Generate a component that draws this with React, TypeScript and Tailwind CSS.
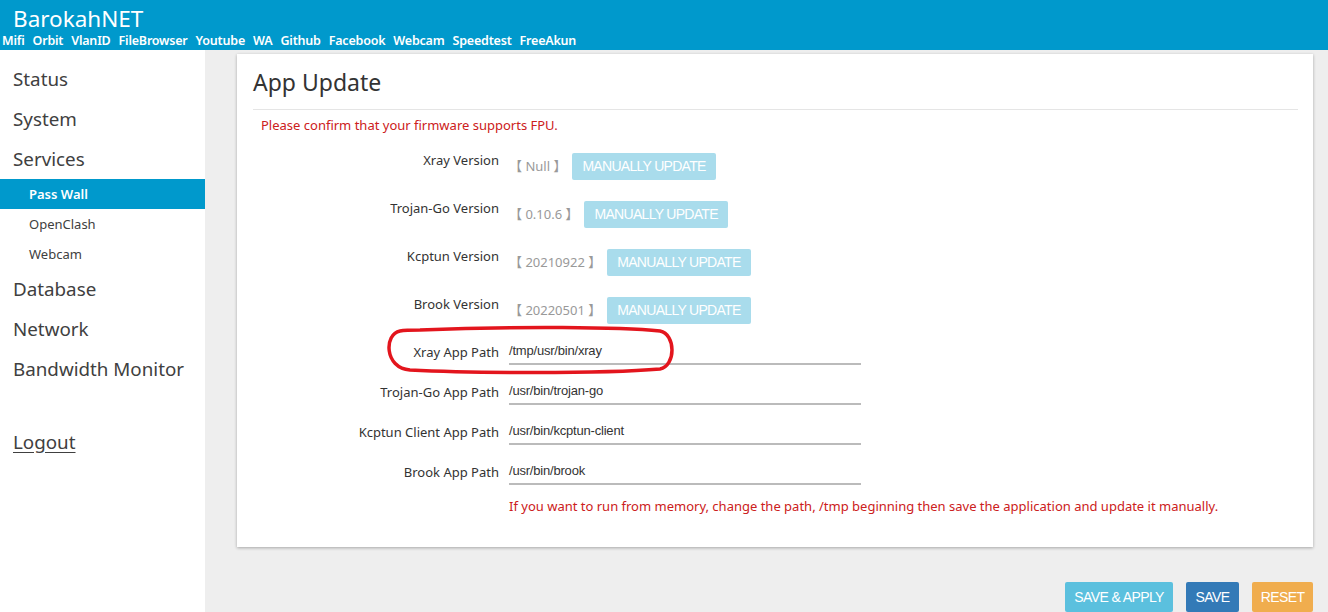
import React from "react";

const links = ["Mifi", "Orbit", "VlanID", "FileBrowser", "Youtube", "WA", "Github", "Facebook", "Webcam", "Speedtest", "FreeAkun"];

const versions = [
  { label: "Xray Version", value: "Null" },
  { label: "Trojan-Go Version", value: "0.10.6" },
  { label: "Kcptun Version", value: "20210922" },
  { label: "Brook Version", value: "20220501" },
];

const paths = [
  { label: "Xray App Path", value: "/tmp/usr/bin/xray" },
  { label: "Trojan-Go App Path", value: "/usr/bin/trojan-go" },
  { label: "Kcptun Client App Path", value: "/usr/bin/kcptun-client" },
  { label: "Brook App Path", value: "/usr/bin/brook" },
];

export default function App() {
  return (
    <div
      className="relative w-[1328px] h-[612px] overflow-hidden bg-[#eeeeee] text-[#333]"
      style={{ fontFamily: '"Noto Sans", "Open Sans", sans-serif' }}
    >
      {/* Header */}
      <div className="h-[50px] bg-[#0099cc] text-white flex flex-col">
        <div className="pl-[13px] pt-[5px] text-[22.5px] leading-[28px]">BarokahNET</div>
        <div className="flex gap-[8px] pl-[2px] text-[12.5px] leading-[16px] font-semibold tracking-[-0.2px]">
          {links.map((l) => (
            <span key={l}>{l}</span>
          ))}
        </div>
      </div>

      <div className="flex h-[562px]">
        {/* Sidebar */}
        <div className="w-[205px] bg-white flex flex-col text-[#404040]">
          <div className="pt-[9px]" />
          {["Status", "System", "Services"].map((s) => (
            <div key={s} className="h-[40px] pl-[13px] flex items-center text-[18.8px]">
              {s}
            </div>
          ))}
          <div className="h-[30px] bg-[#0099cc] text-white font-semibold text-[13px] pl-[29px] flex items-center pt-[2px]">
            Pass Wall
          </div>
          {["OpenClash", "Webcam"].map((s) => (
            <div key={s} className="h-[30px] pl-[29px] flex items-center text-[13px] pt-[2px]">
              {s}
            </div>
          ))}
          {["Database", "Network", "Bandwidth Monitor"].map((s) => (
            <div key={s} className="h-[40px] pl-[13px] flex items-center text-[18.8px]">
              {s}
            </div>
          ))}
          <div className="h-[33px]" />
          <div className="h-[40px] pl-[13px] flex items-center text-[18.8px] underline underline-offset-[3px]">Logout</div>
        </div>

        {/* Main */}
        <div className="flex-1 flex flex-col pl-[32px] pr-[15px] pt-[4px]">
          <div className="bg-white h-[494px] shadow-[0_1px_3px_rgba(0,0,0,0.3)] pl-[16px] pr-[15px] flex flex-col">
            <div className="h-[56px] flex items-center pt-[2px] text-[23px] text-[#333] border-b border-[#e5e5e5]">
              App Update
            </div>
            <div className="h-[32px] pl-[8px] flex items-center text-[13px] text-[#cc2020]">
              Please confirm that your firmware supports FPU.
            </div>
            {versions.map((v) => (
              <div key={v.label} className="h-[48px] flex text-[13px]">
                <div className="w-[246px] text-right pt-[8px] leading-[20px]">{v.label}</div>
                <div className="pl-[10px] pt-[14px] leading-[20px] text-[#999] whitespace-pre" style={{ fontFamily: '"Noto Sans", "Noto Sans CJK SC", sans-serif' }}>
                  {"【 " + v.value + " 】"}
                </div>
                <div className="ml-[6px] mt-[11px] h-[27px] px-[10px] bg-[#a9dcec] text-white rounded-[2px] flex items-center text-[14px] tracking-[-0.7px]" style={{ fontFamily: '"Liberation Sans", Arial, sans-serif' }}>
                  MANUALLY UPDATE
                </div>
              </div>
            ))}
            {paths.map((p) => (
              <div key={p.label} className="h-[40px] flex text-[13px]">
                <div className="w-[246px] text-right pt-[8px] leading-[20px]">{p.label}</div>
                <div className="ml-[10px] mt-[4px] w-[352px] h-[27px] border-b-2 border-[#bbbbbb] flex items-center text-[13px] text-[#333] tracking-[-0.2px]" style={{ fontFamily: '"Liberation Sans", Arial, sans-serif' }}>
                  {p.value}
                </div>
              </div>
            ))}
            <div className="pl-[256px] pt-[2px] leading-[20px] text-[13px] text-[#cc2020]">
              If you want to run from memory, change the path, /tmp beginning then save the application and update it manually.
            </div>
          </div>

          <div className="flex justify-end gap-[13px] mt-[35px] text-[14px] text-white tracking-[-0.6px]" style={{ fontFamily: '"Liberation Sans", Arial, sans-serif' }}>
            <div className="w-[108px] h-[30px] bg-[#5bc0de] rounded-[2px] flex items-center justify-center">SAVE &amp; APPLY</div>
            <div className="w-[53px] h-[30px] bg-[#337ab7] rounded-[2px] flex items-center justify-center">SAVE</div>
            <div className="w-[61px] h-[30px] bg-[#f0ad4e] rounded-[2px] flex items-center justify-center">RESET</div>
          </div>
        </div>
      </div>

      {/* red annotation */}
      <svg className="absolute left-0 top-0 pointer-events-none" width="1328" height="612">
        <path
          d="M 420 330 C 520 326 620 327 660 331 C 676 334 676 366 660 369 C 600 374 470 373 410 370 C 384 368 384 334 400 331 C 405 330 412 330 420 330 Z"
          fill="none"
          stroke="#e3151d"
          strokeWidth="3.5"
        />
      </svg>
    </div>
  );
}
